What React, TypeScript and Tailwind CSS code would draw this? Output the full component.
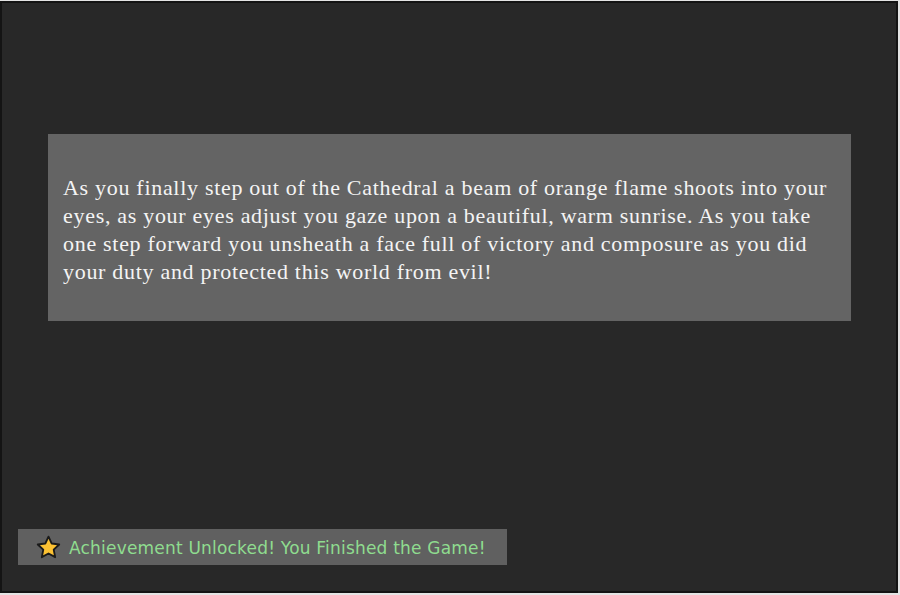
import React from "react";

const StarIcon = () => (
  <svg width="25" height="25" viewBox="0 0 24 24" className="shrink-0">
    <path
      d="M12 1.6l3.1 6.6 7.2.9-5.3 5 1.4 7.2L12 17.8l-6.4 3.5 1.4-7.2-5.3-5 7.2-.9z"
      fill="#fcc233"
      stroke="#1a1a1a"
      strokeWidth="1.8"
      strokeLinejoin="round"
    />
  </svg>
);

const App = () => {
  return (
    <div className="w-[900px] h-[595px] bg-[#e4e4e4] pt-[1px]">
      <div className="w-[898px] h-[592px] border-2 border-[#141414] bg-[#282828] flex flex-col">
        <div className="mt-[131px] ml-[46px] mr-[45px] bg-[#646464] pt-[40px] pb-[35px] px-[15px]">
          <p
            className="text-[#f4f4f4] text-[22px] leading-[28px] tracking-[0.7px] whitespace-nowrap"
            style={{ fontFamily: '"Liberation Serif", "DejaVu Serif", serif' }}
          >
            As you finally step out of the Cathedral a beam of orange flame shoots into your
            <br />
            eyes, as your eyes adjust you gaze upon a beautiful, warm sunrise. As you take
            <br />
            one step forward you unsheath a face full of victory and composure as you did
            <br />
            your duty and protected this world from evil!
          </p>
        </div>
        <div className="mt-auto mb-[26px] ml-[16px] w-[489px] h-[36px] bg-[#606060] flex items-center pl-[18px] gap-[8px]">
          <StarIcon />
          <span
            className="text-[#8fdc8f] text-[17px] tracking-[0.2px] mt-[3px]"
            style={{ fontFamily: '"DejaVu Sans", Verdana, sans-serif' }}
          >
            Achievement Unlocked! You Finished the Game!
          </span>
        </div>
      </div>
    </div>
  );
};

export default App;
